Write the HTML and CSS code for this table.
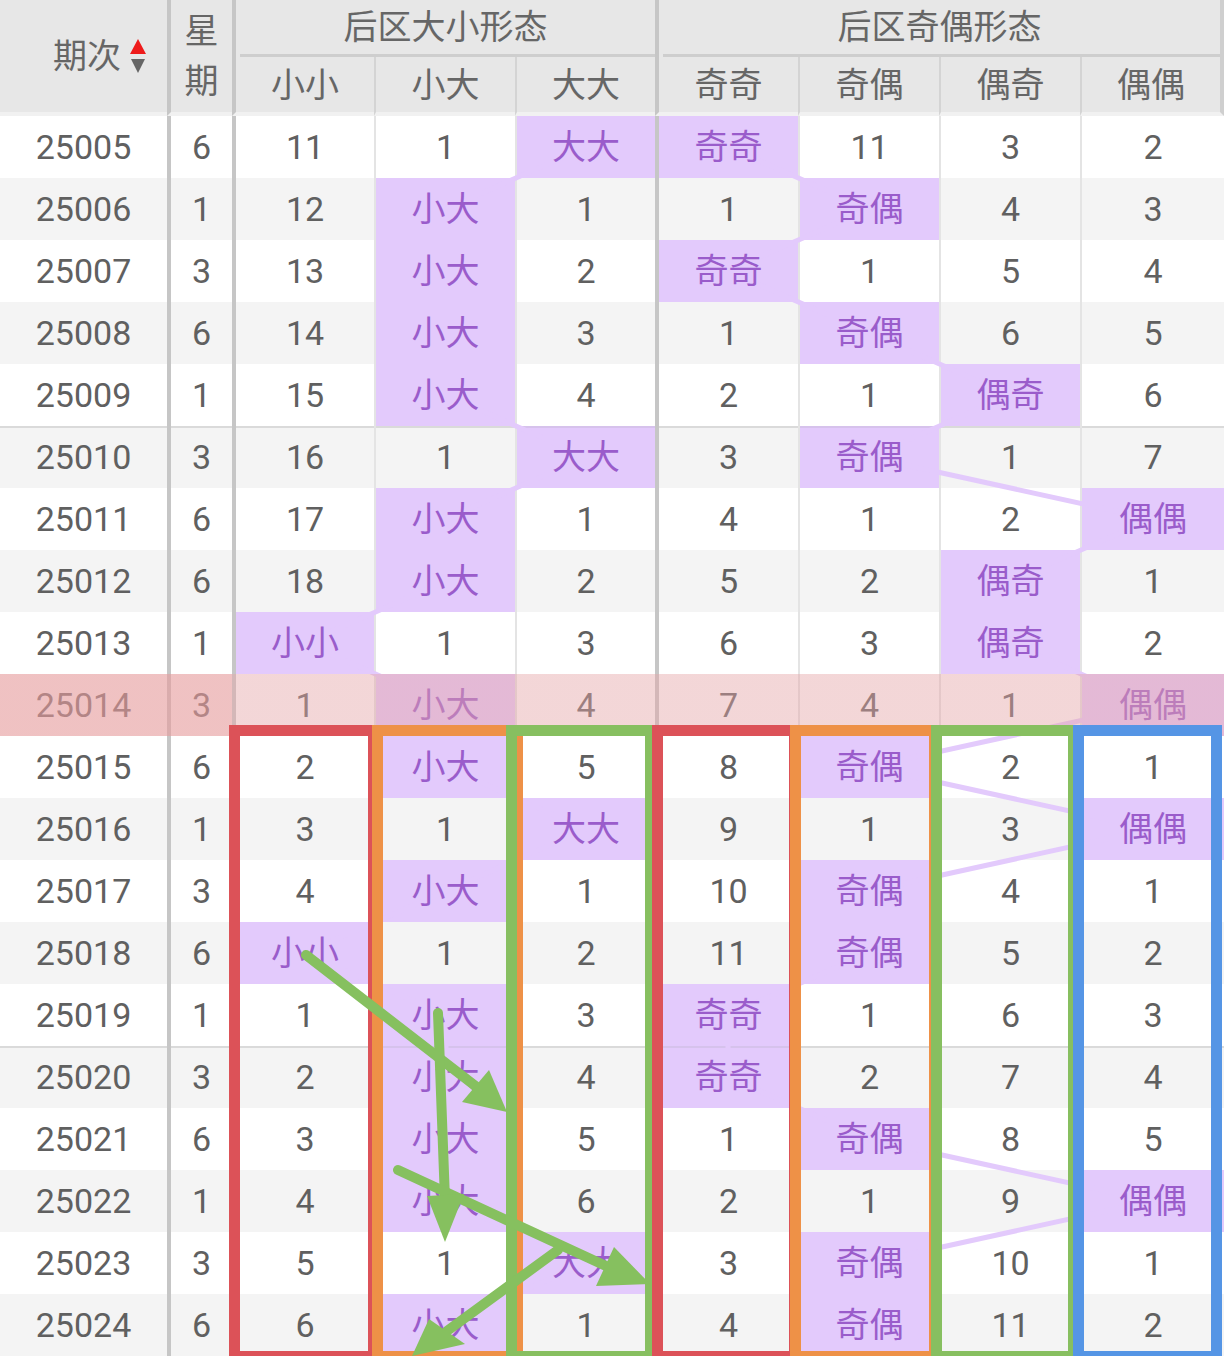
FILE: index.html
```html
<!DOCTYPE html>
<html lang="zh">
<head>
<meta charset="utf-8">
<title>后区形态走势</title>
<link rel="stylesheet" href="styles.css">
</head>
<body>
<div class="chart">
  <div class="head">
    <div class="h h-issue"><span>期次</span><svg class="sort" width="18" height="34" viewBox="0 0 18 34"><polygon points="1,15 17,15 9,0" fill="#ee1b1b"/><polygon points="2,20 16,20 9,34" fill="#666"/></svg></div>
    <div class="h h-week"><span>星</span><span>期</span></div>
    <div class="h h-group g1">后区大小形态</div>
    <div class="h h-group g2">后区奇偶形态</div>
    <div class="h sub k">小小</div>
    <div class="h sub">小大</div>
    <div class="h sub">大大</div>
    <div class="h sub k">奇奇</div>
    <div class="h sub">奇偶</div>
    <div class="h sub">偶奇</div>
    <div class="h sub last">偶偶</div>
  </div>

  <div class="body">
    <div class="row"><div class="c"><span class="t">25005</span></div><div class="c k"><span class="t">6</span></div><div class="c k"><span class="t">11</span></div><div class="c"><span class="t">1</span></div><div class="c p"><span class="t">大大</span></div><div class="c k p"><span class="t">奇奇</span></div><div class="c"><span class="t">11</span></div><div class="c"><span class="t">3</span></div><div class="c"><span class="t">2</span></div></div>
    <div class="row alt"><div class="c"><span class="t">25006</span></div><div class="c k"><span class="t">1</span></div><div class="c k"><span class="t">12</span></div><div class="c p"><span class="t">小大</span></div><div class="c"><span class="t">1</span></div><div class="c k"><span class="t">1</span></div><div class="c p"><span class="t">奇偶</span></div><div class="c"><span class="t">4</span></div><div class="c"><span class="t">3</span></div></div>
    <div class="row"><div class="c"><span class="t">25007</span></div><div class="c k"><span class="t">3</span></div><div class="c k"><span class="t">13</span></div><div class="c p"><span class="t">小大</span></div><div class="c"><span class="t">2</span></div><div class="c k p"><span class="t">奇奇</span></div><div class="c"><span class="t">1</span></div><div class="c"><span class="t">5</span></div><div class="c"><span class="t">4</span></div></div>
    <div class="row alt"><div class="c"><span class="t">25008</span></div><div class="c k"><span class="t">6</span></div><div class="c k"><span class="t">14</span></div><div class="c p"><span class="t">小大</span></div><div class="c"><span class="t">3</span></div><div class="c k"><span class="t">1</span></div><div class="c p"><span class="t">奇偶</span></div><div class="c"><span class="t">6</span></div><div class="c"><span class="t">5</span></div></div>
    <div class="row"><div class="c"><span class="t">25009</span></div><div class="c k"><span class="t">1</span></div><div class="c k"><span class="t">15</span></div><div class="c p"><span class="t">小大</span></div><div class="c"><span class="t">4</span></div><div class="c k"><span class="t">2</span></div><div class="c"><span class="t">1</span></div><div class="c p"><span class="t">偶奇</span></div><div class="c"><span class="t">6</span></div></div>
    <div class="row alt sep"><div class="c"><span class="t">25010</span></div><div class="c k"><span class="t">3</span></div><div class="c k"><span class="t">16</span></div><div class="c"><span class="t">1</span></div><div class="c p"><span class="t">大大</span></div><div class="c k"><span class="t">3</span></div><div class="c p"><span class="t">奇偶</span></div><div class="c"><span class="t">1</span></div><div class="c"><span class="t">7</span></div></div>
    <div class="row"><div class="c"><span class="t">25011</span></div><div class="c k"><span class="t">6</span></div><div class="c k"><span class="t">17</span></div><div class="c p"><span class="t">小大</span></div><div class="c"><span class="t">1</span></div><div class="c k"><span class="t">4</span></div><div class="c"><span class="t">1</span></div><div class="c"><span class="t">2</span></div><div class="c p"><span class="t">偶偶</span></div></div>
    <div class="row alt"><div class="c"><span class="t">25012</span></div><div class="c k"><span class="t">6</span></div><div class="c k"><span class="t">18</span></div><div class="c p"><span class="t">小大</span></div><div class="c"><span class="t">2</span></div><div class="c k"><span class="t">5</span></div><div class="c"><span class="t">2</span></div><div class="c p"><span class="t">偶奇</span></div><div class="c"><span class="t">1</span></div></div>
    <div class="row"><div class="c"><span class="t">25013</span></div><div class="c k"><span class="t">1</span></div><div class="c k p"><span class="t">小小</span></div><div class="c"><span class="t">1</span></div><div class="c"><span class="t">3</span></div><div class="c k"><span class="t">6</span></div><div class="c"><span class="t">3</span></div><div class="c p"><span class="t">偶奇</span></div><div class="c"><span class="t">2</span></div></div>
    <div class="row hl"><div class="c"><span class="t">25014</span></div><div class="c k"><span class="t">3</span></div><div class="c k"><span class="t">1</span></div><div class="c p"><span class="t">小大</span></div><div class="c"><span class="t">4</span></div><div class="c k"><span class="t">7</span></div><div class="c"><span class="t">4</span></div><div class="c"><span class="t">1</span></div><div class="c p"><span class="t">偶偶</span></div><div class="hl-mask"></div></div>
    <div class="row"><div class="c"><span class="t">25015</span></div><div class="c k"><span class="t">6</span></div><div class="c k"><span class="t">2</span></div><div class="c p"><span class="t">小大</span></div><div class="c"><span class="t">5</span></div><div class="c k"><span class="t">8</span></div><div class="c p"><span class="t">奇偶</span></div><div class="c"><span class="t">2</span></div><div class="c"><span class="t">1</span></div></div>
    <div class="row alt"><div class="c"><span class="t">25016</span></div><div class="c k"><span class="t">1</span></div><div class="c k"><span class="t">3</span></div><div class="c"><span class="t">1</span></div><div class="c p"><span class="t">大大</span></div><div class="c k"><span class="t">9</span></div><div class="c"><span class="t">1</span></div><div class="c"><span class="t">3</span></div><div class="c p"><span class="t">偶偶</span></div></div>
    <div class="row"><div class="c"><span class="t">25017</span></div><div class="c k"><span class="t">3</span></div><div class="c k"><span class="t">4</span></div><div class="c p"><span class="t">小大</span></div><div class="c"><span class="t">1</span></div><div class="c k"><span class="t">10</span></div><div class="c p"><span class="t">奇偶</span></div><div class="c"><span class="t">4</span></div><div class="c"><span class="t">1</span></div></div>
    <div class="row alt"><div class="c"><span class="t">25018</span></div><div class="c k"><span class="t">6</span></div><div class="c k p"><span class="t">小小</span></div><div class="c"><span class="t">1</span></div><div class="c"><span class="t">2</span></div><div class="c k"><span class="t">11</span></div><div class="c p"><span class="t">奇偶</span></div><div class="c"><span class="t">5</span></div><div class="c"><span class="t">2</span></div></div>
    <div class="row"><div class="c"><span class="t">25019</span></div><div class="c k"><span class="t">1</span></div><div class="c k"><span class="t">1</span></div><div class="c p"><span class="t">小大</span></div><div class="c"><span class="t">3</span></div><div class="c k p"><span class="t">奇奇</span></div><div class="c"><span class="t">1</span></div><div class="c"><span class="t">6</span></div><div class="c"><span class="t">3</span></div></div>
    <div class="row alt sep"><div class="c"><span class="t">25020</span></div><div class="c k"><span class="t">3</span></div><div class="c k"><span class="t">2</span></div><div class="c p"><span class="t">小大</span></div><div class="c"><span class="t">4</span></div><div class="c k p"><span class="t">奇奇</span></div><div class="c"><span class="t">2</span></div><div class="c"><span class="t">7</span></div><div class="c"><span class="t">4</span></div></div>
    <div class="row"><div class="c"><span class="t">25021</span></div><div class="c k"><span class="t">6</span></div><div class="c k"><span class="t">3</span></div><div class="c p"><span class="t">小大</span></div><div class="c"><span class="t">5</span></div><div class="c k"><span class="t">1</span></div><div class="c p"><span class="t">奇偶</span></div><div class="c"><span class="t">8</span></div><div class="c"><span class="t">5</span></div></div>
    <div class="row alt"><div class="c"><span class="t">25022</span></div><div class="c k"><span class="t">1</span></div><div class="c k"><span class="t">4</span></div><div class="c p"><span class="t">小大</span></div><div class="c"><span class="t">6</span></div><div class="c k"><span class="t">2</span></div><div class="c"><span class="t">1</span></div><div class="c"><span class="t">9</span></div><div class="c p"><span class="t">偶偶</span></div></div>
    <div class="row"><div class="c"><span class="t">25023</span></div><div class="c k"><span class="t">3</span></div><div class="c k"><span class="t">5</span></div><div class="c"><span class="t">1</span></div><div class="c p"><span class="t">大大</span></div><div class="c k"><span class="t">3</span></div><div class="c p"><span class="t">奇偶</span></div><div class="c"><span class="t">10</span></div><div class="c"><span class="t">1</span></div></div>
    <div class="row alt"><div class="c"><span class="t">25024</span></div><div class="c k"><span class="t">6</span></div><div class="c k"><span class="t">6</span></div><div class="c p"><span class="t">小大</span></div><div class="c"><span class="t">1</span></div><div class="c k"><span class="t">4</span></div><div class="c p"><span class="t">奇偶</span></div><div class="c"><span class="t">11</span></div><div class="c"><span class="t">2</span></div></div>
  </div>

  <svg class="trend" width="1224" height="1356" viewBox="0 0 1224 1356">
    <polyline points="586,147 446,209 446,271 446,333 446,395 586,457 446,519 446,581 305,643 446,705 446,767 586,829 446,891 305,953 446,1015 446,1077 446,1139 446,1201 586,1263 446,1325"/>
    <polyline points="728,147 869,209 728,271 869,333 1010,395 869,457 1152,519 1010,581 1010,643 1152,705 869,767 1152,829 869,891 869,953 728,1015 728,1077 869,1139 1152,1201 869,1263 869,1325"/>
  </svg>

  <div class="box red b1"></div>
  <div class="box orange b2"></div>
  <div class="box green b3"></div>
  <div class="box red b4"></div>
  <div class="box orange b5"></div>
  <div class="box green b6"></div>
  <div class="box blue b7"></div>

  <svg class="arrows" width="1224" height="1356" viewBox="0 0 1224 1356">
    <g class="shafts">
      <line x1="306" y1="955" x2="478" y2="1088"/>
      <line x1="438" y1="1013" x2="445" y2="1200"/>
      <line x1="398" y1="1170" x2="606" y2="1266"/>
      <line x1="558" y1="1250" x2="447" y2="1331"/>
    </g>
    <g class="heads">
      <polygon points="507,1112 462,1102 489,1070"/>
      <polygon points="445,1242 427,1196 464,1194"/>
      <polygon points="650,1284 596,1286 614,1247"/>
      <polygon points="412,1356 429,1319 465,1344"/>
    </g>
  </svg>
</div>
</body>
</html>
```
FILE: styles.css
```css
* { box-sizing: border-box; margin: 0; padding: 0; }
html, body { background: #fff; }
body {
  width: 1224px;
  height: 1356px;
  overflow: hidden;
  font-family: Roboto, "Noto Sans CJK SC", sans-serif;
}
.chart { position: relative; width: 1224px; }

.head {
  display: grid;
  grid-template-columns: 167px 65px 142px 141px 140px 143px 141px 141px 144px;
  grid-template-rows: 57px 59px;
  background: #e7e7e7;
  color: #666;
  font-size: 34px;
  line-height: 1;
}
.h { display: flex; align-items: center; justify-content: center; }
.h-issue {
  grid-row: 1 / 3;
  grid-column: 1;
  padding-left: 33px;
  gap: 8px;
  border-bottom: 4px solid #f1f1f1;
}
.sort { display: block; flex: none; }
.h-week {
  grid-row: 1 / 3;
  grid-column: 2;
  flex-direction: column;
  line-height: 50px;
  border-left: 4px solid #c6c6c6;
  border-bottom: 4px solid #f1f1f1;
}
.h-group {
  border-left: 4px solid #c6c6c6;
  padding-bottom: 3px;
  background: linear-gradient(#cecece, #cecece) no-repeat left 4px bottom 0 / calc(100% - 4px) 3px, #e7e7e7;
}
.g1 { grid-column: 3 / 6; }
.g2 { grid-column: 6 / 10; border-right: 4px solid #cfcfcf; }
.sub {
  border-left: 2px solid #d4d4d4;
  border-bottom: 4px solid #f1f1f1;
}
.sub.k { border-left: 4px solid #c6c6c6; }
.sub.last { border-right: 4px solid #cfcfcf; }

.row {
  display: grid;
  grid-template-columns: 167px 65px 142px 141px 140px 143px 141px 141px 144px;
  height: 62px;
  font-size: 34px;
  line-height: 1;
  color: #606060;
  background: #fff;
}
.row.alt { background: #f4f4f4; }
.c {
  display: flex;
  align-items: center;
  justify-content: center;
  border-left: 2px solid #e4e4e4;
}
.c:first-child { border-left: 0; }
.c.k { border-left: 4px solid #c6c6c6; }
.c.p { background: #e3cafc; color: #9a5ccb; }
.t { position: relative; z-index: 2; }
.row.sep .c { box-shadow: inset 0 2px 0 #dadada; }
.row.sep .c.p { box-shadow: inset 0 2px 0 #d6c2ec; }

.row.hl { position: relative; }
.hl-mask {
  position: absolute;
  top: 0;
  left: 0;
  right: 0;
  bottom: 0;
  z-index: 3;
  background: linear-gradient(to right, rgba(230, 156, 157, 0.62) 0, rgba(230, 156, 157, 0.62) 232px, rgba(229, 165, 167, 0.45) 232px, rgba(229, 165, 167, 0.45) 100%);
}

.trend {
  position: absolute;
  top: 0;
  left: 0;
  z-index: 1;
  pointer-events: none;
}
.trend polyline {
  fill: none;
  stroke: #e3cafc;
  stroke-width: 5;
  stroke-linejoin: round;
  stroke-linecap: round;
}

.box {
  position: absolute;
  top: 725px;
  height: 637px;
  border: 11px solid;
  z-index: 4;
}
.red { border-color: #dc5258; }
.orange { border-color: #ee9147; }
.green { border-color: #87bf60; }
.blue { border-color: #5595e5; }
.b1 { left: 229px; width: 150px; }
.b2 { left: 372px; width: 151px; }
.b3 { left: 506px; width: 150px; }
.b4 { left: 652px; width: 148px; }
.b5 { left: 790px; width: 150px; }
.b6 { left: 931px; width: 148px; }
.b7 { left: 1073px; width: 149px; }

.arrows {
  position: absolute;
  top: 0;
  left: 0;
  z-index: 5;
  pointer-events: none;
}
.shafts line {
  stroke: #86c05f;
  stroke-width: 10;
  stroke-linecap: round;
}
.heads polygon { fill: #86c05f; }
```
